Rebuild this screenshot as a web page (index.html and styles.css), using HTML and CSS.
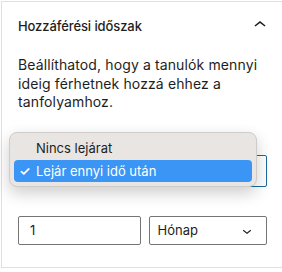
FILE: index.html
```html
<!DOCTYPE html>
<html lang="hu">
<head>
<meta charset="utf-8">
<link rel="stylesheet" href="styles.css">
</head>
<body>
<div class="panel">
  <div class="head">
    <h2 class="title">Hozzáférési időszak</h2>
    <svg class="chev-up" width="24" height="24" viewBox="0 0 24 24"><path d="M6.5 12.4 12 8l5.5 4.4-.9 1.2L12 9.9l-4.6 3.7z" fill="#1e1e1e"/></svg>
  </div>
  <div class="body">
    <p class="desc">Beállíthatod, hogy a tanulók mennyi ideig férhetnek hozzá ehhez a tanfolyamhoz.</p>
    <div class="select-wrap">
      <div class="select focused"></div>
      <div class="menu">
        <div class="item">Nincs lejárat</div>
        <div class="item active"><span class="check">✓</span>Lejár ennyi idő után</div>
      </div>
    </div>
    <div class="row">
      <div class="field">1</div>
      <div class="field sel">Hónap
        <svg class="chev-down" width="18" height="18" viewBox="0 0 24 24"><path d="M17.5 11.6 12 16l-5.5-4.4.9-1.2L12 14.1l4.6-3.7z" fill="#1e1e1e"/></svg>
      </div>
    </div>
  </div>
</div>
</body>
</html>
```
FILE: styles.css
```css
* { box-sizing: border-box; }
html, body { margin: 0; padding: 0; background: #fff; }
body {
  font-family: Inter, "Noto Sans", sans-serif;
  font-size: 13px;
  color: #1e1e1e;
  padding: 1px 0 0 1px;
}
.panel {
  border-top: 1px solid #e0e0e0;
  border-left: 1px solid #e0e0e0;
  border-bottom: 1px solid #e0e0e0;
  height: 267px;
}
.head {
  height: 48px;
  padding: 0 10px 0 16px;
  display: flex;
  align-items: center;
  justify-content: space-between;
}
.title {
  margin: 0;
  font-size: 13px;
  font-weight: 500;
  letter-spacing: -0.1px;
}
.chev-up { margin-top: -2px; }
.body { padding: 0 15px 0 16px; }
.desc {
  margin: 6px 0 0;
  font-size: 14px;
  line-height: 18.6px;
  letter-spacing: 0.12px;
}
.select-wrap {
  position: relative;
  margin-top: 43px;
  height: 32px;
}
.select {
  height: 32px;
  border: 1.5px solid #1a6a9e;
  border-radius: 2px;
}
.menu {
  position: absolute;
  left: -9px;
  top: -23px;
  width: 248px;
  height: 55px;
  background: #e9e5e3;
  border: 1px solid #cfcbc9;
  border-radius: 8px;
  box-shadow: 0 6px 16px rgba(0,0,0,0.2);
  padding: 4px 4px;
  font-size: 13px;
}
.item {
  height: 22px;
  line-height: 22px;
  padding-left: 22px;
  border-radius: 4px;
  color: #1e1e1e;
}
.item + .item { margin-top: 1px; }
.item.active {
  background: #3a95f5;
  color: #fff;
  padding-left: 5px;
}
.check { display: inline-block; width: 17px; font-weight: 600; }
.row {
  display: flex;
  gap: 8px;
  margin-top: 29px;
}
.field {
  flex: 1;
  height: 29px;
  border: 1px solid #757575;
  border-radius: 2px;
  padding: 0 11px;
  line-height: 28px;
  font-size: 13px;
  display: flex;
  align-items: center;
}
.field.sel { justify-content: space-between; padding: 0 10px 0 8px; }
.chev-down { margin-top: 1px; }
```
